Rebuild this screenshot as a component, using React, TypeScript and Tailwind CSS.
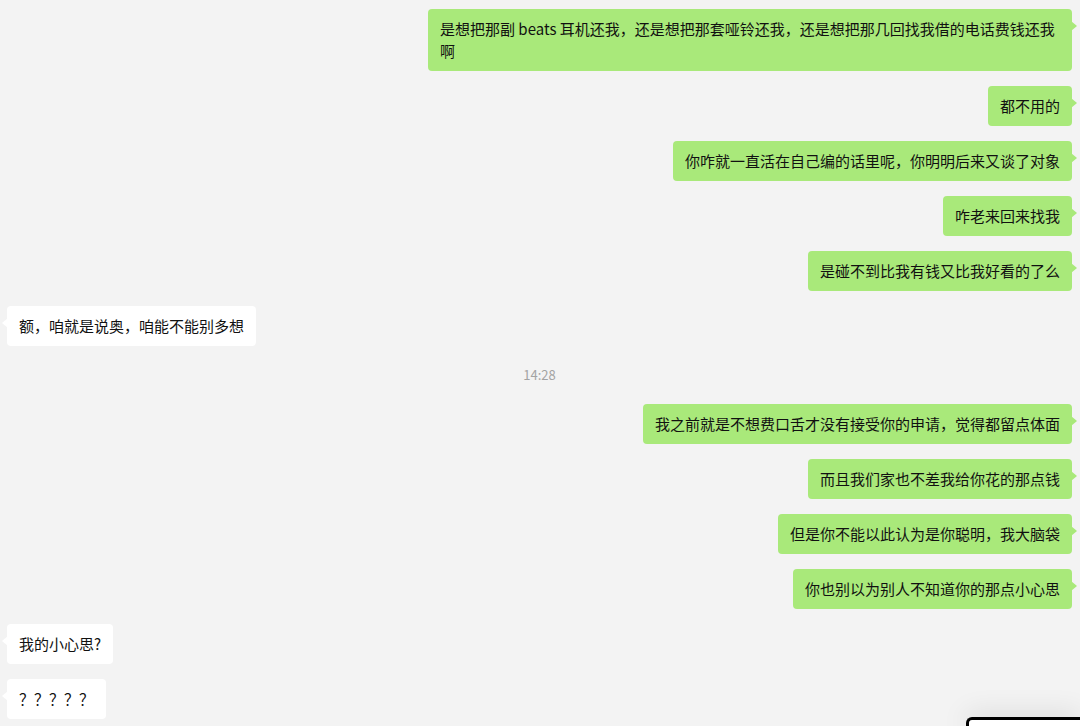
import type { ReactNode } from "react";

type Msg =
  | { kind: "me"; text: string }
  | { kind: "them"; text: string }
  | { kind: "time"; text: string };

const messages: Msg[] = [
  {
    kind: "me",
    text: "是想把那副 beats 耳机还我，还是想把那套哑铃还我，还是想把那几回找我借的电话费钱还我啊",
  },
  { kind: "me", text: "都不用的" },
  { kind: "me", text: "你咋就一直活在自己编的话里呢，你明明后来又谈了对象" },
  { kind: "me", text: "咋老来回来找我" },
  { kind: "me", text: "是碰不到比我有钱又比我好看的了么" },
  { kind: "them", text: "额，咱就是说奥，咱能不能别多想" },
  { kind: "time", text: "14:28" },
  { kind: "me", text: "我之前就是不想费口舌才没有接受你的申请，觉得都留点体面" },
  { kind: "me", text: "而且我们家也不差我给你花的那点钱" },
  { kind: "me", text: "但是你不能以此认为是你聪明，我大脑袋" },
  { kind: "me", text: "你也别以为别人不知道你的那点小心思" },
  { kind: "them", text: "我的小心思?" },
  { kind: "them", text: "？？？？？" },
];

function Bubble({ mine, children }: { mine: boolean; children: ReactNode }) {
  return (
    <div className={mine ? "flex justify-end" : "flex justify-start"}>
      <div
        className={[
          "relative max-w-[644px] rounded-[4px] px-3 py-[9px] text-[15px] leading-[22px] text-[#111111]",
          mine ? "bg-[#a9e97a]" : "bg-white",
        ].join(" ")}
      >
        {mine ? (
          <span className="absolute right-[-5px] top-[12px] h-0 w-0 border-y-[5px] border-l-[6px] border-y-transparent border-l-[#a9e97a]" />
        ) : (
          <span className="absolute left-[-5px] top-[12px] h-0 w-0 border-y-[5px] border-r-[6px] border-y-transparent border-r-white" />
        )}
        {children}
      </div>
    </div>
  );
}

export default function App() {
  return (
    <div
      className="relative h-[726px] w-full overflow-hidden bg-[#f3f3f3]"
      style={{ fontFamily: '"Noto Sans CJK SC", "Noto Sans", sans-serif' }}
    >
      <div className="flex flex-col gap-[15px] pl-[7px] pr-[8px] pt-[9px]">
        {messages.map((m, i) =>
          m.kind === "time" ? (
            <div
              className="flex h-[28px] items-center justify-center text-[13px] text-[#a3a3a3]"
              key={i}
            >
              {m.text}
            </div>
          ) : (
            <Bubble key={i} mine={m.kind === "me"}>
              {m.text}
            </Bubble>
          )
        )}
      </div>

      {/* corner of another window peeking in */}
      <div className="absolute bottom-0 right-0 h-[9px] w-[114px] rounded-tl-[6px] border-l-[3px] border-t-[3px] border-black bg-white shadow-[0_0_28px_rgba(0,0,0,0.2)]" />
    </div>
  );
}
